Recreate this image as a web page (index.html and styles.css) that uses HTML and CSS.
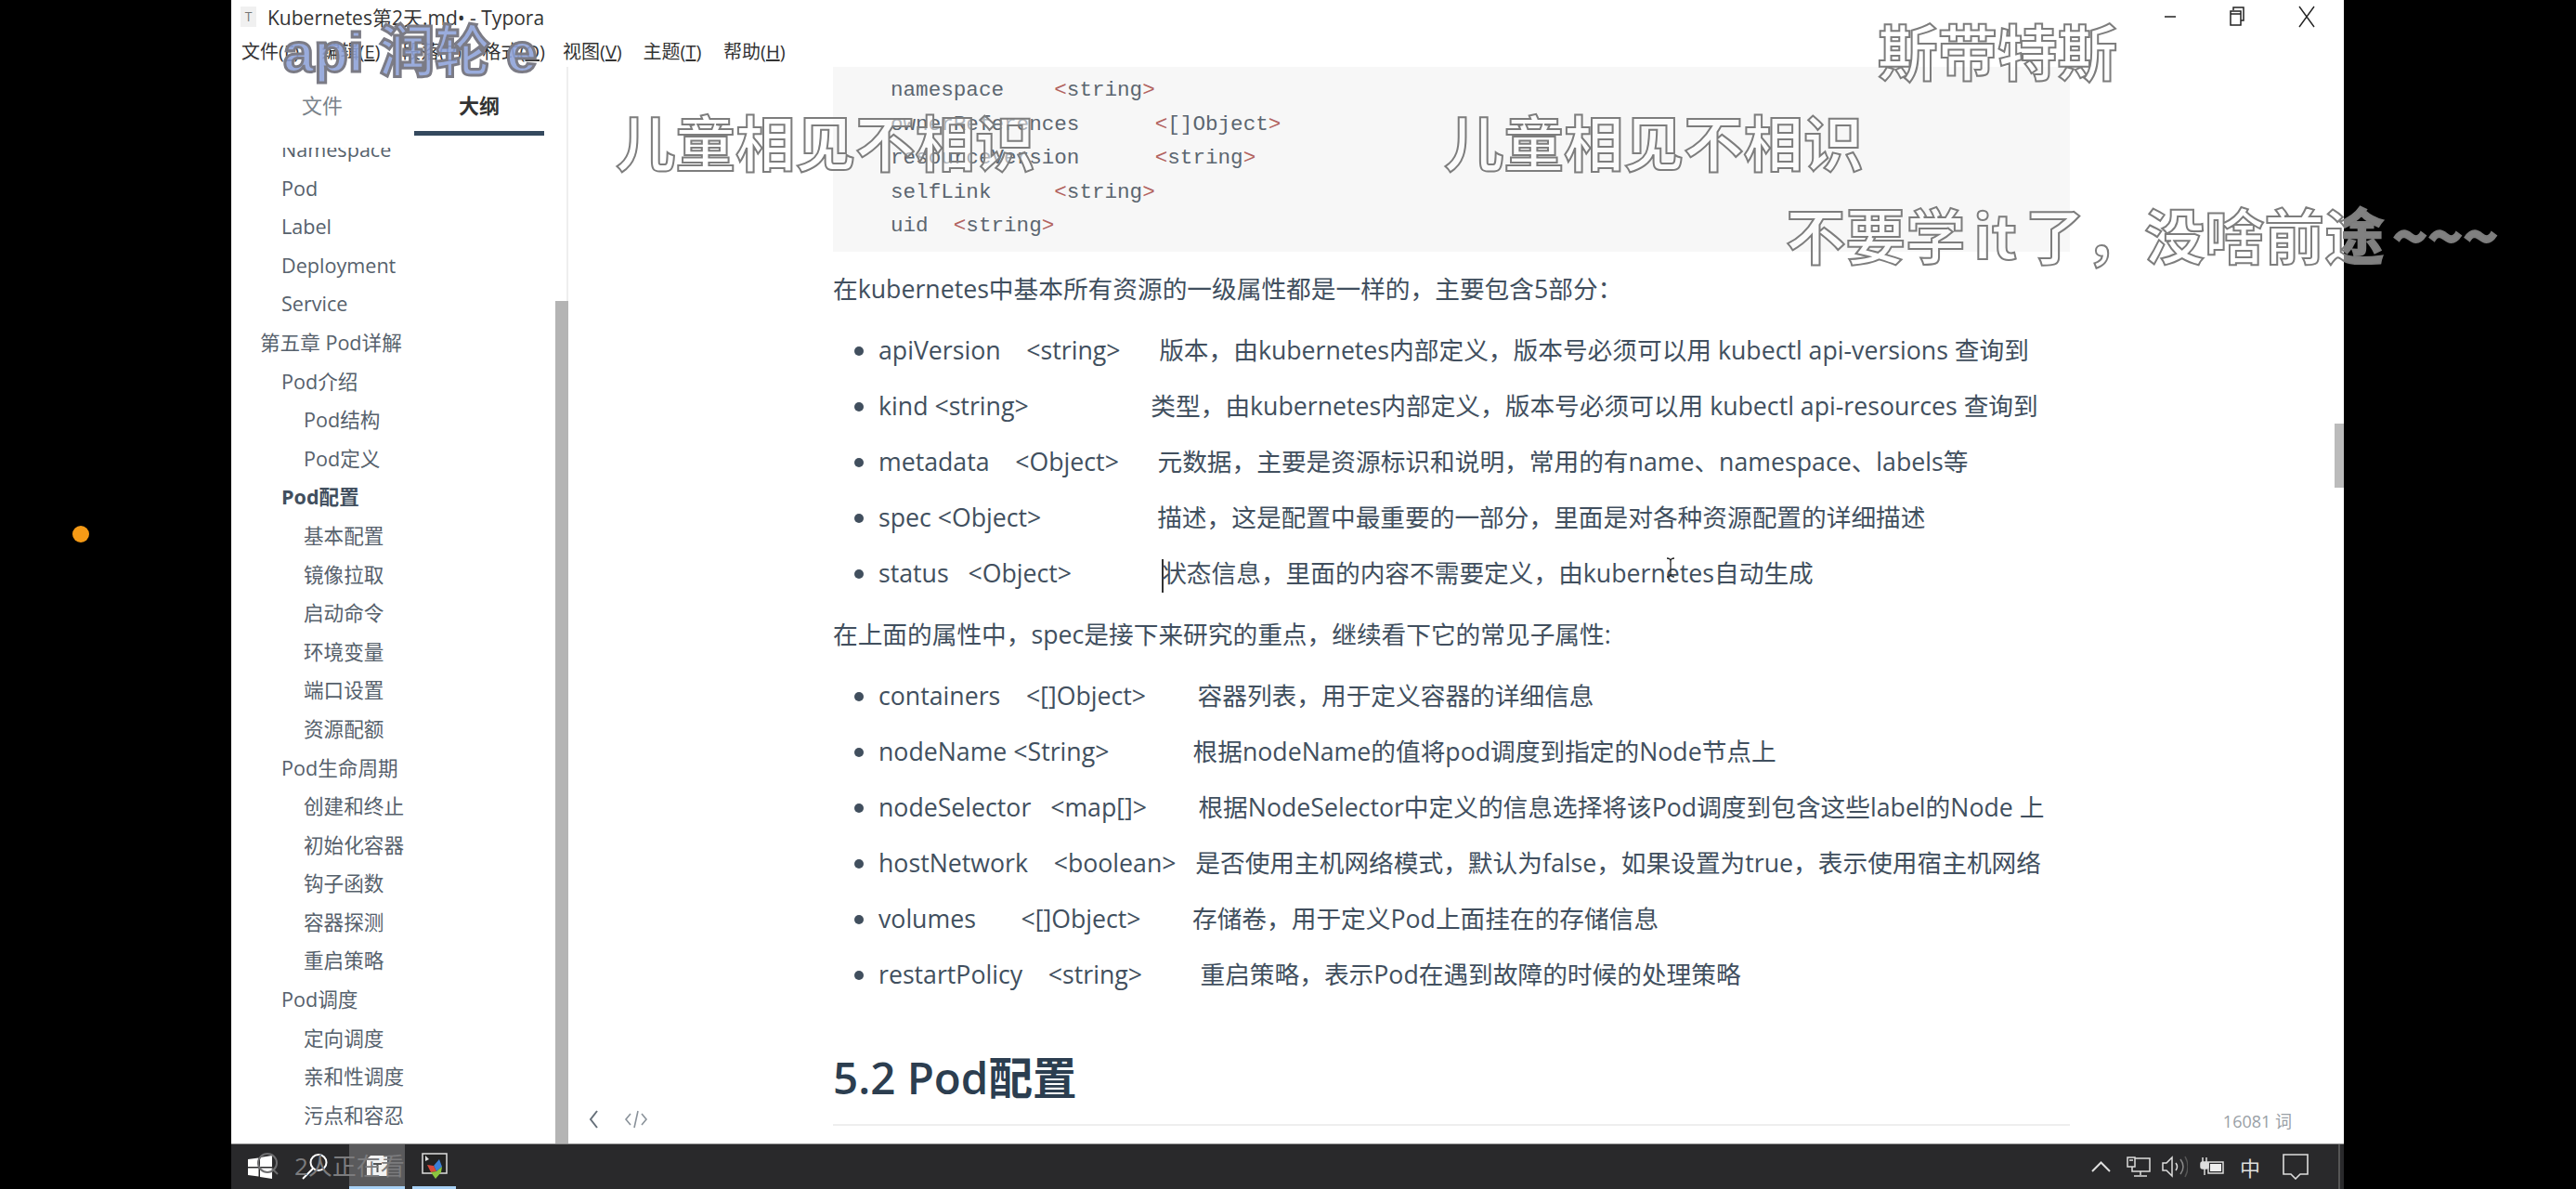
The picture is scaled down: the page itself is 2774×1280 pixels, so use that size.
FILE: index.html
```html
<!DOCTYPE html>
<html lang="zh-CN">
<head>
    <meta charset="UTF-8">
    <title>Kubernetes第2天.md - Typora</title>
    <link rel="stylesheet" href="styles.css">
</head>
<body>
<div class="screen">
    <div class="window">
        <div class="titlebar">
            <div class="app-icon">T</div>
            <div class="title">Kubernetes第2天.md• - Typora</div>
            <div class="win-controls">
                <svg width="14" height="14" viewBox="0 0 14 14"><path d="M1 7h12" stroke="#222" stroke-width="1.5"/></svg>
                <svg width="18" height="22" viewBox="0 0 18 22" fill="none" stroke="#222" stroke-width="1.5"><path d="M5 4V1h11v14h-3"/><rect x="2" y="5" width="11" height="15" fill="#fff"/><path d="M2 8h11"/></svg>
                <svg width="20" height="24" viewBox="0 0 20 24" fill="none" stroke="#222" stroke-width="1.4"><path d="M2 1l16 22M18 1L2 23"/></svg>
            </div>
        </div>
        <div class="menubar">
            <span>文件(<u>F</u>)</span>
            <span>编辑(<u>E</u>)</span>
            <span>段落(<u>P</u>)</span>
            <span>格式(<u>O</u>)</span>
            <span>视图(<u>V</u>)</span>
            <span>主题(<u>T</u>)</span>
            <span>帮助(<u>H</u>)</span>
        </div>
        <div class="panes">
            <div class="sidebar">
                <div class="tabs">
                    <div class="tab">文件</div>
                    <div class="tab active">大纲</div>
                </div>
                <div class="outline">
                    <div class="outline-list">
                        <div class="lv2">Namespace</div>
                        <div class="lv2">Pod</div>
                        <div class="lv2">Label</div>
                        <div class="lv2">Deployment</div>
                        <div class="lv2">Service</div>
                        <div class="lv1">第五章 Pod详解</div>
                        <div class="lv2">Pod介绍</div>
                        <div class="lv3">Pod结构</div>
                        <div class="lv3">Pod定义</div>
                        <div class="lv2 current">Pod配置</div>
                        <div class="lv3">基本配置</div>
                        <div class="lv3">镜像拉取</div>
                        <div class="lv3">启动命令</div>
                        <div class="lv3">环境变量</div>
                        <div class="lv3">端口设置</div>
                        <div class="lv3">资源配额</div>
                        <div class="lv2">Pod生命周期</div>
                        <div class="lv3">创建和终止</div>
                        <div class="lv3">初始化容器</div>
                        <div class="lv3">钩子函数</div>
                        <div class="lv3">容器探测</div>
                        <div class="lv3">重启策略</div>
                        <div class="lv2">Pod调度</div>
                        <div class="lv3">定向调度</div>
                        <div class="lv3">亲和性调度</div>
                        <div class="lv3">污点和容忍</div>
                    </div>
                </div>
                <div class="side-thumb"></div>
            </div>
            <div class="main">
                <div class="content">
                    <pre class="code">namespace    <i>&lt;</i>string<i>&gt;</i>
ownerReferences      <i>&lt;</i>[]Object<i>&gt;</i>
resourceVersion      <i>&lt;</i>string<i>&gt;</i>
selfLink     <i>&lt;</i>string<i>&gt;</i>
uid  <i>&lt;</i>string<i>&gt;</i></pre>
                    <p>在kubernetes中基本所有资源的一级属性都是一样的，主要包含5部分：</p>
                    <ul>
                        <li>apiVersion    &lt;string&gt;      版本，由kubernetes内部定义，版本号必须可以用 kubectl api-versions 查询到</li>
                        <li>kind &lt;string&gt;                   类型，由kubernetes内部定义，版本号必须可以用 kubectl api-resources 查询到</li>
                        <li>metadata    &lt;Object&gt;      元数据，主要是资源标识和说明，常用的有name、namespace、labels等</li>
                        <li>spec &lt;Object&gt;                  描述，这是配置中最重要的一部分，里面是对各种资源配置的详细描述</li>
                        <li>status   &lt;Object&gt;              <span class="caret"></span>状态信息，里面的内容不需要定义，由kubernetes自动生成</li>
                    </ul>
                    <p>在上面的属性中，spec是接下来研究的重点，继续看下它的常见子属性:</p>
                    <ul>
                        <li>containers    &lt;[]Object&gt;        容器列表，用于定义容器的详细信息</li>
                        <li>nodeName &lt;String&gt;             根据nodeName的值将pod调度到指定的Node节点上</li>
                        <li>nodeSelector   &lt;map[]&gt;        根据NodeSelector中定义的信息选择将该Pod调度到包含这些label的Node 上</li>
                        <li>hostNetwork    &lt;boolean&gt;   是否使用主机网络模式，默认为false，如果设置为true，表示使用宿主机网络</li>
                        <li>volumes       &lt;[]Object&gt;        存储卷，用于定义Pod上面挂在的存储信息</li>
                        <li>restartPolicy    &lt;string&gt;         重启策略，表示Pod在遇到故障的时候的处理策略</li>
                    </ul>
                    <h2>5.2 Pod配置</h2>
                </div>
                <div class="main-thumb"></div>
                <div class="foot-left">
                    <svg width="12" height="22" viewBox="0 0 12 22" fill="none" stroke="#66707a" stroke-width="2"><path d="M10 2L3 11l7 9"/></svg>
                    <svg width="26" height="22" viewBox="0 0 26 22" fill="none" stroke="#8a929a" stroke-width="1.6"><path d="M7 5l-5 6 5 6M19 5l5 6-5 6M15 2l-4 18"/></svg>
                </div>
                <div class="word-count">16081 词</div>
            </div>
        </div>
    </div>
    <div class="taskbar">
        <div class="tb-start">
            <svg width="26" height="25" viewBox="0 0 26 25" fill="#fff"><path d="M0 4l11.500-1.600v9.500H0zM13 2.100L26 0v11.900H13zM0 13.400h11.500v9.200L0 21zM13 13.400h13V25l-13-2.100z"/></svg>
        </div>
        <div class="tb-search">
            <svg width="32" height="28" viewBox="0 0 32 28" fill="none" stroke="#fff" stroke-width="2"><circle cx="19" cy="9.500" r="8.500"/><path d="M13 16L2 27"/></svg>
        </div>
        <div class="tb-app open">
            <svg width="22" height="22" viewBox="0 0 22 22"><path d="M4 0h18v22H0V4z" fill="#f2f2f2"/><path d="M7 9h9M11.500 9v9" stroke="#555" stroke-width="2" fill="none"/></svg>
        </div>
        <div class="tb-app second">
            <svg width="28" height="28" viewBox="0 0 28 28">
                <rect x="1" y="1" width="26" height="21" fill="#222" stroke="#ddd" stroke-width="1.500"/>
                <path d="M13 14l6-7 3 8-6 5z" fill="#3b7fd6"/>
                <path d="M6 13l7 1 3 6-6 1z" fill="#d9483b"/>
                <path d="M10 21l6-1 6-5-1 6-6 7z" fill="#8cc63f"/>
                <path d="M4 3l4 4-4 2z" fill="#ddd"/>
            </svg>
        </div>
        <div class="tray">
            <svg class="tray-up" width="21" height="12" viewBox="0 0 21 12" fill="none" stroke="#ddd" stroke-width="2"><path d="M1 11l9.500-9.500L20 11"/></svg>
            <svg width="26" height="22" viewBox="0 0 26 22" fill="none" stroke="#ddd" stroke-width="1.500"><rect x="6" y="2" width="19" height="14"/><rect x="1" y="1" width="8" height="10" fill="#29292b"/><path d="M15 16v4M8 21h14M3 4h4"/></svg>
            <svg width="28" height="26" viewBox="0 0 28 26" fill="none" stroke="#ddd" stroke-width="1.500"><path d="M1 9h4l6-6v20l-6-6H1z"/><path d="M15 9q3 4 0 8"/><path d="M20 5q6 8 0 16" stroke="#888"/><path d="M25 2q6 11 0 22" stroke="#555"/></svg>
            <svg width="28" height="22" viewBox="0 0 28 22" fill="none" stroke="#ddd" stroke-width="1.500"><path d="M4 1v5M8 1v5"/><rect x="2" y="6" width="8" height="7" rx="2" fill="#ddd"/><path d="M6 13v7"/><rect x="10" y="6" width="16" height="12"/><rect x="12" y="8" width="12" height="8" fill="#eee" stroke="none"/></svg>
            <span class="ime">中</span>
            <svg width="28" height="28" viewBox="0 0 28 28" fill="none" stroke="#ddd" stroke-width="1.600"><path d="M1 1h26v21h-8l-5 5-5-5H1z"/></svg>
        </div>
    </div>

    <div class="dot"></div>
    <svg class="ibeam" width="10" height="22" viewBox="0 0 10 22" fill="none" stroke="#222" stroke-width="1.300"><path d="M1 1q4 0 4 3v14q0 3-4 3M9 1q-4 0-4 3M9 21q-4 0-4-3"/></svg>
    <svg class="watch-eye" width="26" height="26" viewBox="0 0 26 26" fill="none" stroke="#6e6e70" stroke-width="2"><circle cx="12" cy="12" r="10"/><path d="M17 18l6 6"/></svg>
    <div class="watch-count">2人正在看</div>
    <div class="danmu blue">api 润轮 e</div>
    <div class="danmu d1">儿童相见不相识</div>
    <div class="danmu d2">儿童相见不相识</div>
    <div class="danmu d3">斯带特斯</div>
    <div class="danmu d4">不要学 it 了，没啥前途 ~~~</div>
</div>
</body>
</html>
```

FILE: styles.css
```css
/* colours */
:root {
  --text-color: #414f5e;
  --heading-color: #2c3e50;
  --side-text: #56616c;
  --taskbar: #29292b;
}

* {
  box-sizing: border-box;
}

body {
  margin: 0;
  background-color: #000;
  font-family: "Open Sans", "Noto Sans CJK SC", sans-serif;
  color: var(--text-color);
}

.screen {
  position: relative;
  width: 2774px;
  height: 1280px;
  overflow: hidden;
  padding-left: 249px;
}

.window {
  width: 2275px;
  height: 1231px;
  background-color: #fff;
  display: flex;
  flex-direction: column;
}

/* title + menu */
.titlebar {
  height: 36px;
  flex: none;
  display: flex;
  align-items: center;
  padding-left: 10px;
}

.app-icon {
  width: 17px;
  height: 22px;
  background-color: #f0f0f0;
  color: #777;
  font-size: 14px;
  line-height: 22px;
  text-align: center;
}

.title {
  margin-left: 12px;
  font-size: 21px;
  color: #333;
  white-space: nowrap;
}

.win-controls {
  margin-left: auto;
  display: flex;
  align-items: center;
  gap: 56px;
  padding-right: 30px;
}

.menubar {
  height: 36px;
  flex: none;
  display: flex;
  align-items: center;
  padding-left: 11px;
  font-size: 20px;
  color: #333;
}

.menubar span {
  width: 86.500px;
  white-space: nowrap;
}

.panes {
  flex: 1;
  min-height: 0;
  display: flex;
}

/* left panel */
.sidebar {
  position: relative;
  width: 363px;
  flex: none;
  display: flex;
  flex-direction: column;
  border-right: 2px solid #eee;
}

.tabs {
  height: 74px;
  flex: none;
  display: flex;
  gap: 29px;
  padding-left: 28px;
}

.tab {
  width: 140px;
  text-align: center;
  font-size: 22px;
  line-height: 82px;
  color: #7a828a;
}

.tab.active {
  color: #333;
  font-weight: 600;
  border-bottom: 5px solid #34495e;
}

.outline {
  flex: 1;
  min-height: 0;
  margin-top: 13px;
  overflow: hidden;
}

.outline-list {
  margin-top: -19px;
  font-size: 21.600px;
  color: var(--side-text);
}

.outline-list div {
  height: 41.600px;
  line-height: 41.600px;
  white-space: nowrap;
}

.lv1 {
  padding-left: 31px;
}

.lv2 {
  padding-left: 54px;
}

.lv3 {
  padding-left: 78px;
}

.outline-list .current {
  font-weight: 700;
  color: #414f5e;
}

.side-thumb {
  position: absolute;
  right: -2px;
  top: 252px;
  bottom: 0;
  width: 14px;
  background-color: #b4b4b4;
}

/* editor */
.main {
  position: relative;
  flex: 1;
  min-width: 0;
  overflow: hidden;
}

.content {
  width: 1332px;
  margin-left: 285px;
  font-size: 26.700px;
}

.code {
  margin: 0;
  height: 199px;
  padding: 7px 0 0 62px;
  background-color: #f7f7f7;
  font-family: "Liberation Mono", monospace;
  font-size: 22.600px;
  line-height: 36.500px;
  color: #5c6670;
}

.code i {
  font-style: normal;
  color: #b2635f;
}

.content p {
  margin: 20px 0 16px;
  line-height: 40px;
  white-space: nowrap;
}

.content ul {
  margin: 16px 0;
  padding-left: 49px;
}

.content ul + p {
  margin-top: 16px;
}

.content li {
  height: 60px;
  line-height: 60px;
  white-space: pre;
}

.caret {
  display: inline-block;
  width: 2px;
  height: 36px;
  margin-right: -2px;
  vertical-align: middle;
  background-color: #333;
}

h2 {
  margin: 51px 0 0;
  height: 82px;
  line-height: 60px;
  font-size: 47.500px;
  font-weight: 600;
  color: var(--heading-color);
  border-bottom: 2px solid #eee;
}

.main-thumb {
  position: absolute;
  right: 0;
  top: 384px;
  width: 10px;
  height: 69px;
  background-color: #bbb;
}

.foot-left {
  position: absolute;
  left: 21px;
  top: 1122px;
  display: flex;
  align-items: center;
  gap: 27px;
}

.word-count {
  position: absolute;
  right: 56px;
  top: 1121px;
  font-size: 18px;
  color: #99a0a6;
}

/* taskbar */
.taskbar {
  width: 2275px;
  height: 49px;
  background-color: var(--taskbar);
  display: flex;
  align-items: stretch;
  border-top: 1px solid #8a8a8a;
}

.tb-start {
  width: 75px;
  padding-left: 18px;
  display: flex;
  align-items: center;
}

.tb-search {
  width: 52px;
  display: flex;
  align-items: center;
}

.tb-app {
  display: flex;
  align-items: center;
  justify-content: center;
  border-bottom: 3px solid #a6d0f5;
}

.tb-app.open {
  width: 60px;
  background-color: #5a5a5c;
}

.tb-app.second {
  width: 47px;
  margin-left: 8px;
}

.tray {
  margin-left: auto;
  margin-right: 4px;
  display: flex;
  align-items: center;
  gap: 12px;
  padding-right: 32px;
  border-right: 2px solid #555;
}

.tray-up {
  margin-right: 5px;
}

.ime {
  width: 22px;
  margin: 0 12px 0 4px;
  font-size: 22px;
  color: #ddd;
}

/* things on top of the video */
.dot {
  position: absolute;
  left: 78px;
  top: 566px;
  width: 18px;
  height: 18px;
  border-radius: 50%;
  background-color: #f59a16;
}

.ibeam {
  position: absolute;
  left: 1794px;
  top: 600px;
}

.watch-eye {
  position: absolute;
  left: 276px;
  top: 1240px;
}

.watch-count {
  position: absolute;
  left: 317px;
  top: 1235px;
  font-size: 26px;
  color: #7c7c7e;
  white-space: nowrap;
}

.danmu {
  position: absolute;
  font-family: "Noto Sans CJK SC", sans-serif;
  font-weight: 700;
  font-size: 64.500px;
  line-height: 1;
  color: rgba(255, 255, 255, 0.5);
  -webkit-text-stroke: 2px #7d7d7d;
  white-space: nowrap;
}

.danmu.blue {
  left: 305px;
  top: 27px;
  font-family: "Liberation Sans", "Noto Sans CJK SC", sans-serif;
  font-size: 60px;
  color: rgba(140, 160, 215, 0.88);
  -webkit-text-stroke: 3px #7b7b85;
}

.danmu.d1 {
  left: 663px;
  top: 119px;
}

.danmu.d2 {
  left: 1555px;
  top: 119px;
}

.danmu.d3 {
  left: 2022px;
  top: 21px;
}

.danmu.d4 {
  left: 1923px;
  top: 219px;
  word-spacing: -6px;
}
```
